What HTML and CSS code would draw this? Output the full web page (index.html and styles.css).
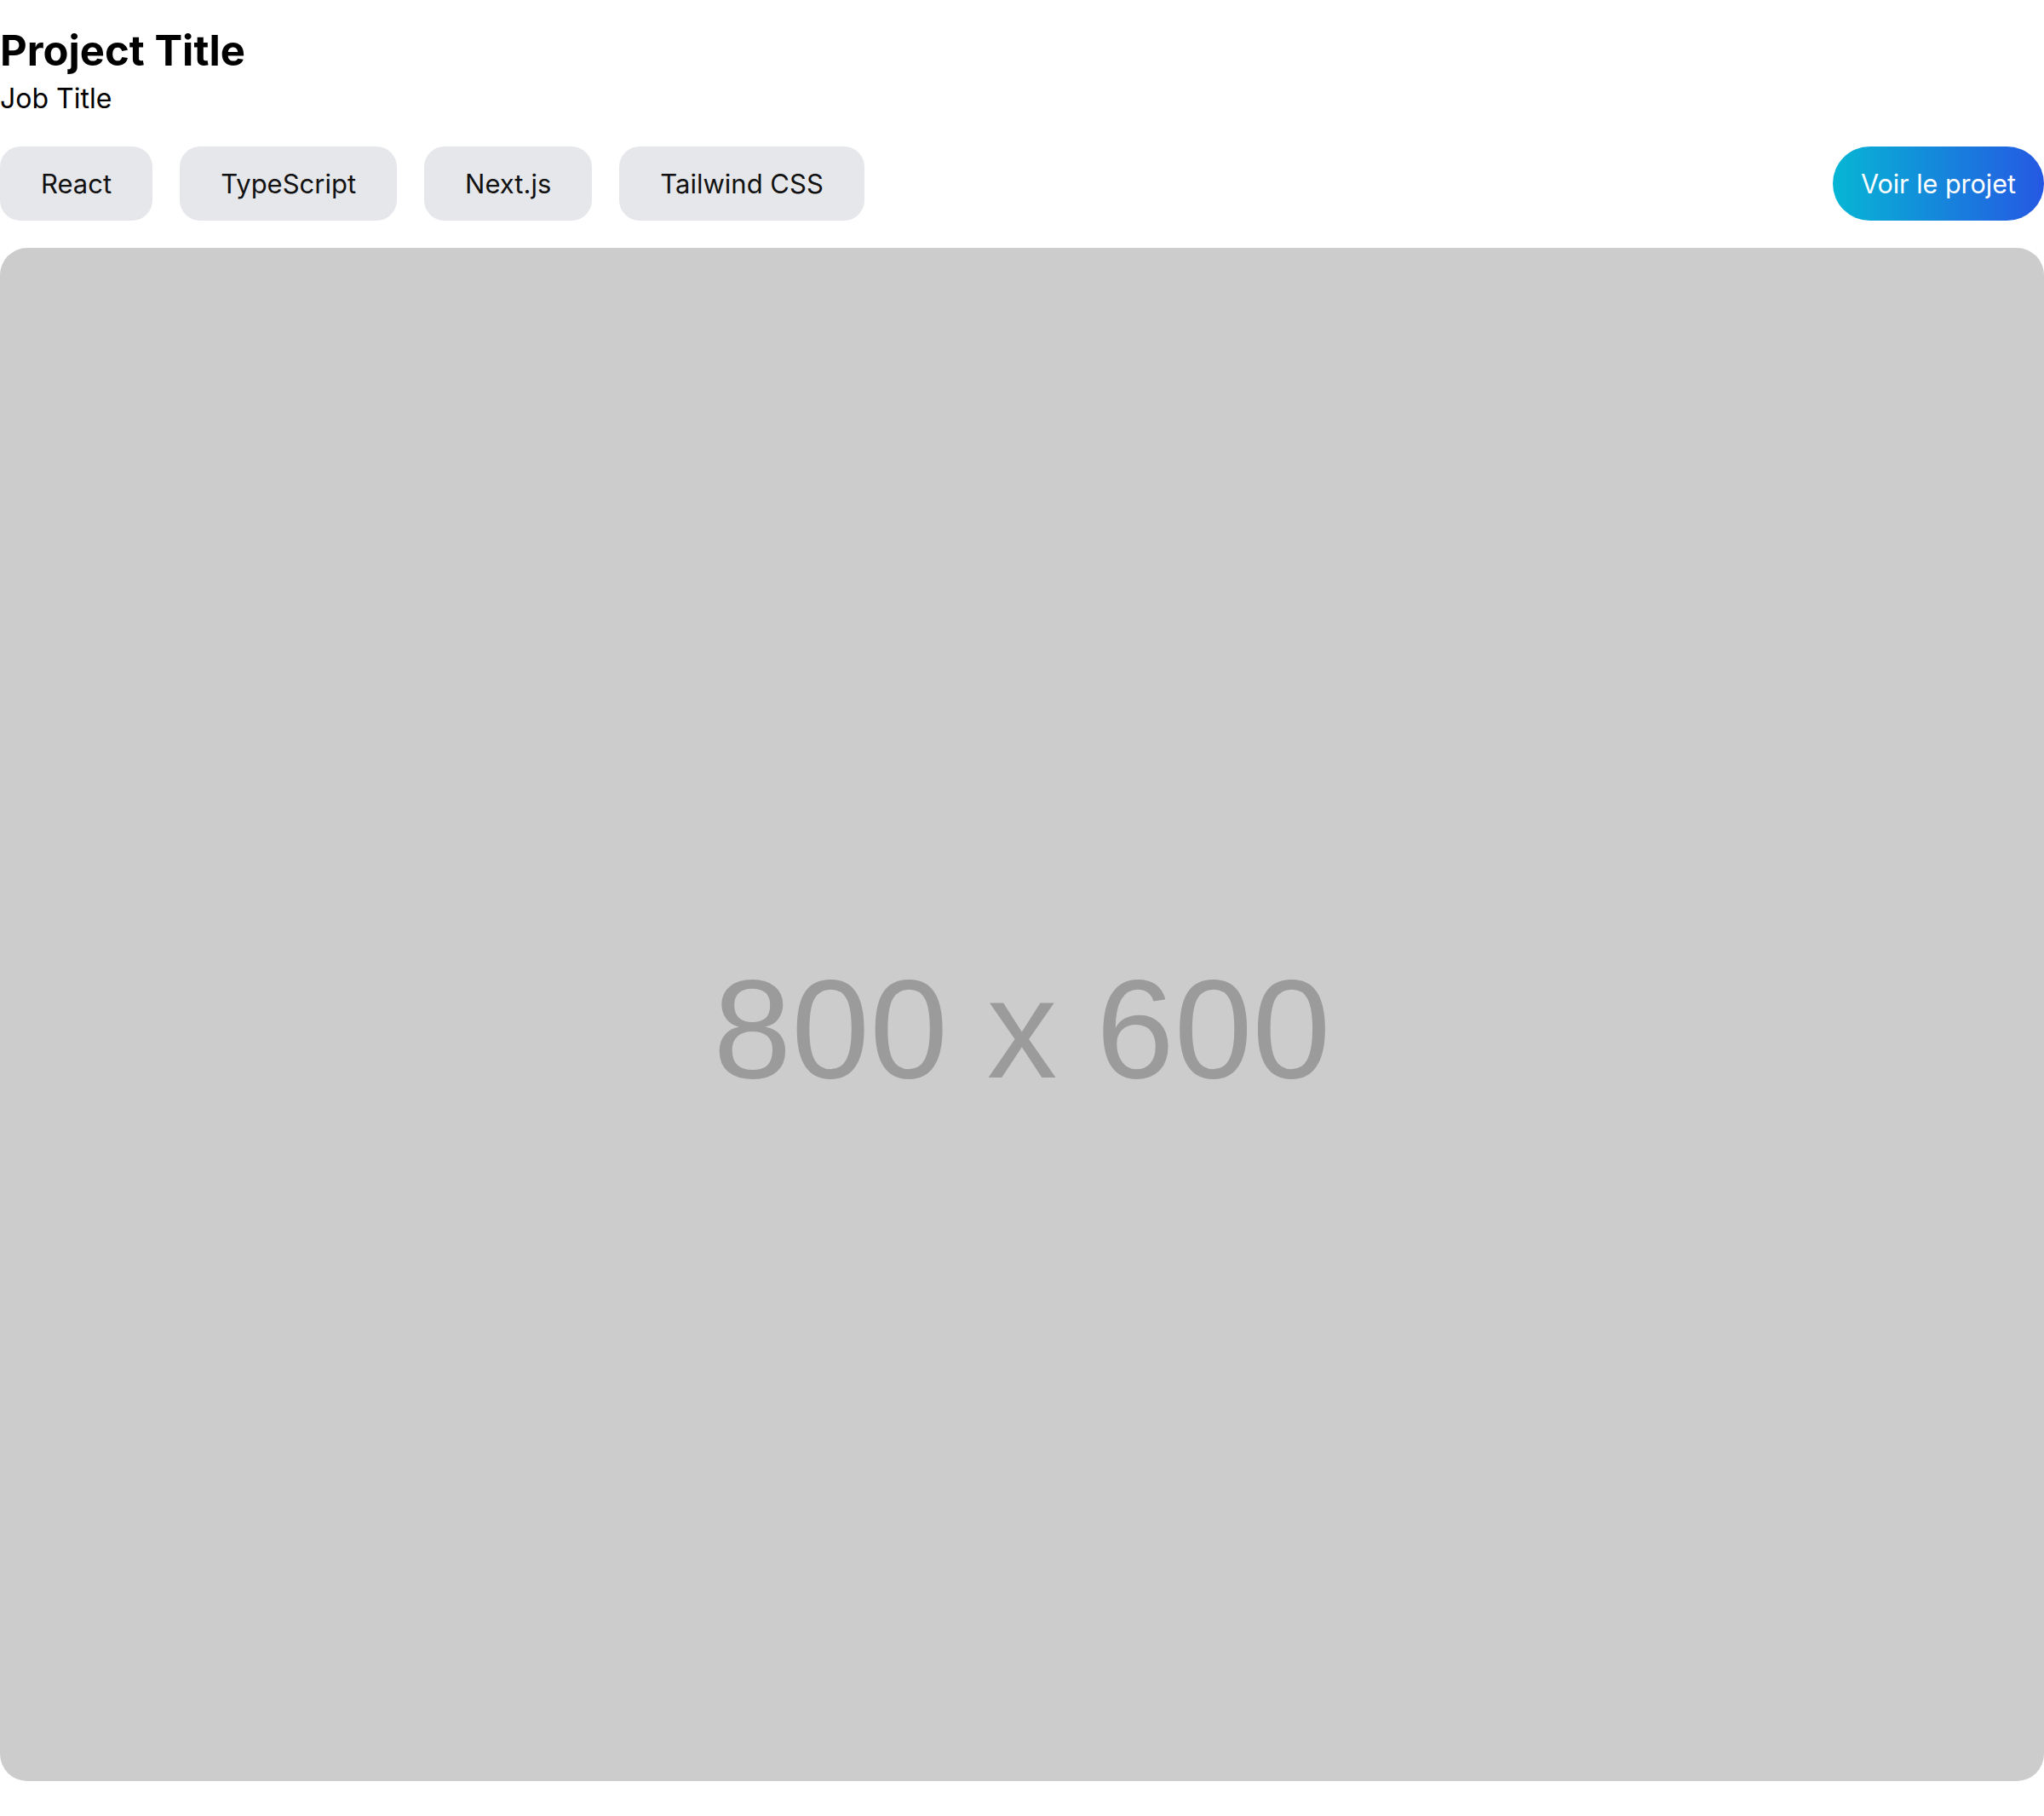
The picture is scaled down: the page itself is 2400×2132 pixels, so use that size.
FILE: index.html
```html
<!DOCTYPE html>
<html lang="fr">
<head>
<meta charset="utf-8">
<title>Project Title</title>
<link rel="stylesheet" href="styles.css">
</head>
<body>
<main class="project">
  <header class="project-header">
    <h1 class="project-title">Project Title</h1>
    <p class="job-title">Job Title</p>
  </header>
  <div class="toolbar">
    <ul class="tags">
      <li class="tag">React</li>
      <li class="tag">TypeScript</li>
      <li class="tag">Next.js</li>
      <li class="tag">Tailwind CSS</li>
    </ul>
    <a class="cta" href="#">Voir le projet</a>
  </div>
  <div class="preview">
    <span class="preview-label">800 x 600</span>
  </div>
</main>
</body>
</html>
```

FILE: styles.css
```css
* {
  box-sizing: border-box;
}

html, body {
  margin: 0;
  padding: 0;
  background: #ffffff;
}

body {
  font-family: Inter, "Noto Sans", sans-serif;
  color: #000000;
}

.project {
  display: flex;
  flex-direction: column;
  padding: 30px 0 40px;
}

.project-header {
  display: flex;
  flex-direction: column;
}

.project-title {
  margin: 0;
  font-size: 49px;
  line-height: 60px;
  font-weight: 700;
  color: #000000;
}

.job-title {
  margin: 6px 0 0;
  font-size: 32px;
  line-height: 40px;
  font-weight: 400;
  color: #000000;
}

.toolbar {
  display: flex;
  align-items: center;
  justify-content: space-between;
  margin-top: 36px;
}

.tags {
  display: flex;
  gap: 32px;
  margin: 0;
  padding: 0;
  list-style: none;
}

.tag {
  background: #e5e7eb;
  border-radius: 24px;
  padding: 24px 48px;
  font-size: 31px;
  line-height: 39px;
  color: #111111;
}

.cta {
  display: block;
  padding: 24px 33px;
  border-radius: 9999px;
  background: linear-gradient(90deg, #06b6d4 0%, #2558e3 100%);
  color: #ffffff;
  font-size: 30.5px;
  line-height: 39px;
  text-decoration: none;
}

.preview {
  margin-top: 32px;
  height: 1800px;
  border-radius: 32px;
  background: #cccccc;
  display: flex;
  align-items: center;
  justify-content: center;
  padding-top: 34px;
}

.preview-label {
  font-family: "Liberation Sans", Arial, sans-serif;
  font-size: 165px;
  line-height: normal;
  color: #9b9b9b;
}
```
